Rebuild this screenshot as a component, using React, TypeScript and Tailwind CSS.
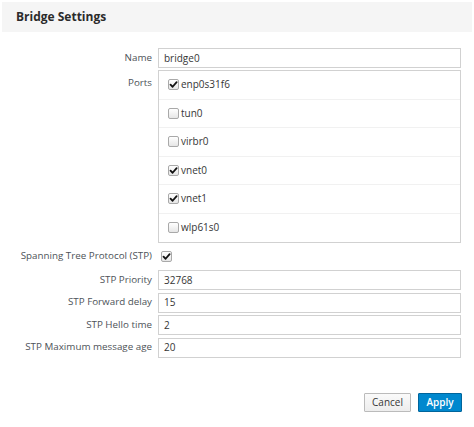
import React from 'react';

const ports = [
  { name: 'enp0s31f6', checked: true },
  { name: 'tun0', checked: false },
  { name: 'virbr0', checked: false },
  { name: 'vnet0', checked: true },
  { name: 'vnet1', checked: true },
  { name: 'wlp61s0', checked: false },
];

const stpFields = [
  { label: 'STP Priority', value: '32768' },
  { label: 'STP Forward delay', value: '15' },
  { label: 'STP Hello time', value: '2' },
  { label: 'STP Maximum message age', value: '20' },
];

function Checkbox({ checked }: { checked: boolean }) {
  return (
    <span className="w-[11px] h-[11px] rounded-[2px] border border-[#a9a9a9] bg-gradient-to-b from-[#ffffff] to-[#e6e6e6] flex items-center justify-center shrink-0">
      {checked && (
        <svg viewBox="0 0 12 12" className="w-[9px] h-[9px]">
          <path d="M2 6.2 L4.8 9 L10.2 2.8" fill="none" stroke="#111" strokeWidth={2.4} strokeLinecap="round" strokeLinejoin="round" />
        </svg>
      )}
    </span>
  );
}

export default function App() {
  return (
    <div className="w-[474px] h-[427px] bg-white pt-[2px] px-[2px] font-['Open_Sans',sans-serif] text-[#363636]">
      {/* Header */}
      <div className="h-[30px] bg-[#f5f5f5] flex items-center px-[14px]">
        <h1 className="text-[12px] font-bold text-[#2b2b2b]">Bridge Settings</h1>
      </div>

      {/* Body */}
      <div className="pt-[16px] pr-[11px] grid grid-cols-[150px_1fr] gap-x-[6px] text-[9.8px]">
        <label className="text-right text-[#4d5258] self-center">Name</label>
        <div className="h-[20px] border border-[#d1d1d1] flex items-center px-[5px] text-[10px]">bridge0</div>

        <label className="text-right text-[#4d5258] pt-[6px] mt-[2px]">Ports</label>
        <div className="mt-[2px] border border-[#d1d1d1] text-[10px]">
          {ports.map((p, i) => (
            <div
              key={p.name}
              className={`h-[28.5px] flex items-center gap-[2px] pl-[9px] ${i < ports.length - 1 ? 'border-b border-[#f1f1f1]' : ''}`}
            >
              <Checkbox checked={p.checked} />
              <span>{p.name}</span>
            </div>
          ))}
        </div>

        <label className="text-right text-[#4d5258] h-[27px] flex items-center justify-end">Spanning Tree Protocol (STP)</label>
        <div className="h-[27px] flex items-center pl-[3px]">
          <Checkbox checked={true} />
        </div>

        {stpFields.map((f) => (
          <React.Fragment key={f.label}>
            <label className="text-right text-[#4d5258] h-[20px] mb-[2.5px] flex items-center justify-end">{f.label}</label>
            <div className="h-[20px] mb-[2.5px] border border-[#d1d1d1] flex items-center px-[5px] text-[10px]">{f.value}</div>
          </React.Fragment>
        ))}
      </div>

      {/* Footer */}
      <div className="flex justify-end gap-[7px] pr-[10px] mt-[33px]">
        <button className="w-[47px] h-[19px] border border-[#bbbbbb] bg-gradient-to-b from-[#fafafa] to-[#ededed] text-[10px] text-[#363636] rounded-[1px]">
          Cancel
        </button>
        <button className="w-[44px] h-[19px] border border-[#00659c] bg-[#0088ce] text-[10px] font-semibold text-white rounded-[1px]">
          Apply
        </button>
      </div>
    </div>
  );
}
